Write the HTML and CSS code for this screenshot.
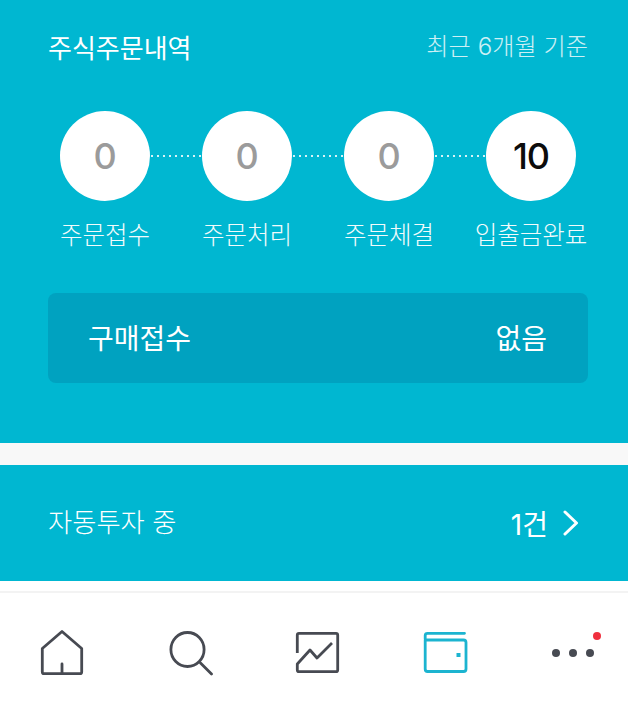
FILE: index.html
```html
<!DOCTYPE html>
<html lang="ko">
<head>
<meta charset="utf-8">
<title>주식주문내역</title>
<link rel="stylesheet" href="styles.css">
</head>
<body>
<main class="page">
  <section class="orders">
    <header class="orders-head">
      <h2 class="orders-title">주식주문내역</h2>
      <span class="orders-note">최근 6개월 기준</span>
    </header>
    <div class="steps">
      <div class="circle">0</div>
      <div class="dots"></div>
      <div class="circle">0</div>
      <div class="dots"></div>
      <div class="circle">0</div>
      <div class="dots"></div>
      <div class="circle circle-on">10</div>
    </div>
    <div class="labels">
      <span>주문접수</span>
      <span>주문처리</span>
      <span>주문체결</span>
      <span>입출금완료</span>
    </div>
    <div class="status">
      <span>구매접수</span>
      <span>없음</span>
    </div>
  </section>
  <section class="auto">
    <span class="auto-label">자동투자 중</span>
    <span class="auto-value">1건
      <svg class="chev" width="16" height="26" viewBox="0 0 16 26"><path d="M2 2 L13.500 13 L2 24" fill="none" stroke="#fff" stroke-width="3" stroke-linecap="round" stroke-linejoin="round"/></svg>
    </span>
  </section>
  <nav class="tabbar">
    <svg class="tab" width="46" height="48" viewBox="0 0 46 48"><g fill="none" stroke="#474a52" stroke-width="2.800" stroke-linejoin="round" stroke-linecap="round"><path d="M23 3.500 L42.700 20.500 V44 Q42.700 45.700 41 45.700 H5 Q3.300 45.700 3.300 44 V20.500 Z"/><path d="M23 36 V45"/></g></svg>
    <svg class="tab" width="46" height="48" viewBox="0 0 46 48"><g fill="none" stroke="#474a52" stroke-width="2.800" stroke-linecap="round"><ellipse cx="20.500" cy="21.500" rx="16.600" ry="17"/><path d="M33.500 35 L44.500 46"/></g></svg>
    <svg class="tab" width="46" height="48" viewBox="0 0 46 48"><g fill="none" stroke="#474a52" stroke-width="2.800" stroke-linejoin="round"><path d="M3.300 25 V7 Q3.300 5.300 5 5.300 H42 Q43.700 5.300 43.700 7 V42 Q43.700 43.700 42 43.700 H5 Q3.300 43.700 3.300 42 V36 L16 22 L23 30 L38 15"/></g></svg>
    <svg class="tab" width="46" height="48" viewBox="0 0 46 48"><g fill="none" stroke="#1cb4d0" stroke-width="2.800" stroke-linecap="round" stroke-linejoin="round"><path d="M3.200 11 V7.500 Q3.200 5.300 5.500 5.300 H42.500"/><path d="M3.200 12 H41.500 Q44 12 44 14.500 V41 Q44 43.500 41.500 43.500 H5.500 Q3.200 43.500 3.200 41 Z"/></g><rect x="34.500" y="25" width="4" height="4" fill="#1cb4d0"/></svg>
    <span class="tab tab-more">
      <svg width="46" height="48" viewBox="0 0 46 48"><g fill="#474a52"><circle cx="7" cy="25" r="4"/><circle cx="24" cy="25" r="4"/><circle cx="41" cy="25" r="4"/></g></svg>
      <i class="badge"></i>
    </span>
  </nav>
</main>
</body>
</html>
```

FILE: styles.css
```css
* { box-sizing: border-box; }
html, body { margin: 0; padding: 0; }
body {
  width: 628px;
  height: 713px;
  overflow: hidden;
  background: #fff;
  font-family: "Noto Sans CJK KR", "Noto Sans", sans-serif;
  color: #fff;
}
.page { display: flex; flex-direction: column; height: 713px; background: #fff; }

.orders { height: 465px; background: #00b7d1; border-bottom: 22px solid #f8f8f8; padding: 25px 40px 0 48px; }
.orders-head { display: flex; justify-content: space-between; align-items: center; height: 44px; }
.orders-title { margin: 0; font-size: 26px; font-weight: 400; line-height: 44px; }
.orders-note { font-family: Inter, "Noto Sans CJK KR", sans-serif; font-size: 24.200px; font-weight: 300; line-height: 44px; opacity: .8; }

.steps { display: flex; align-items: center; margin: 42px 12px 0; }
.circle {
  flex: none;
  width: 90px;
  height: 90px;
  border-radius: 50%;
  background: #fff;
  color: #9b9b9b;
  font-family: Inter, "Noto Sans", sans-serif;
  font-size: 36px;
  font-weight: 500;
  line-height: 90px;
  text-align: center;
}
.circle-on { color: #0c0c0c; letter-spacing: -1px; }
.dots { flex: 1; height: 2px; margin: 0 1px; background: radial-gradient(circle at 1px 1px, #d5f3f7 1px, transparent 1.100px) 0 0 / 6px 2px repeat-x; }

.labels { display: grid; grid-template-columns: repeat(4, 142px); margin: 14px 0 0 -14px; }
.labels span { font-size: 24.500px; font-weight: 300; line-height: 38px; text-align: center; white-space: nowrap; opacity: .95; }

.status {
  display: flex;
  justify-content: space-between;
  align-items: center;
  height: 90px;
  margin-top: 40px;
  padding: 0 41px 2px 40px;
  background: #00a2c0;
  border-radius: 8px;
  font-size: 28px;
  font-weight: 400;
}

.auto {
  display: flex;
  justify-content: space-between;
  align-items: center;
  height: 116px;
  padding: 0 48px;
  background: #00b7d1;
}
.auto-label { font-size: 26.300px; font-weight: 300; margin-top: -5px; }
.auto-value { display: flex; align-items: center; gap: 15px; font-family: Inter, "Noto Sans CJK KR", sans-serif; font-size: 28px; font-weight: 400; margin-right: 1px; }

.tabbar {
  display: flex;
  justify-content: space-between;
  align-items: flex-start;
  height: 122px;
  margin-top: 10px;
  border-top: 2px solid #f3f3f3;
  padding: 35px 33px 0 39px;
}
.tab { flex: none; display: block; }
.tab-more { position: relative; width: 46px; height: 48px; }
.tab-more svg { display: block; }
.badge { position: absolute; top: 4px; right: -6px; width: 8px; height: 8px; border-radius: 50%; background: #f0303e; }
```
